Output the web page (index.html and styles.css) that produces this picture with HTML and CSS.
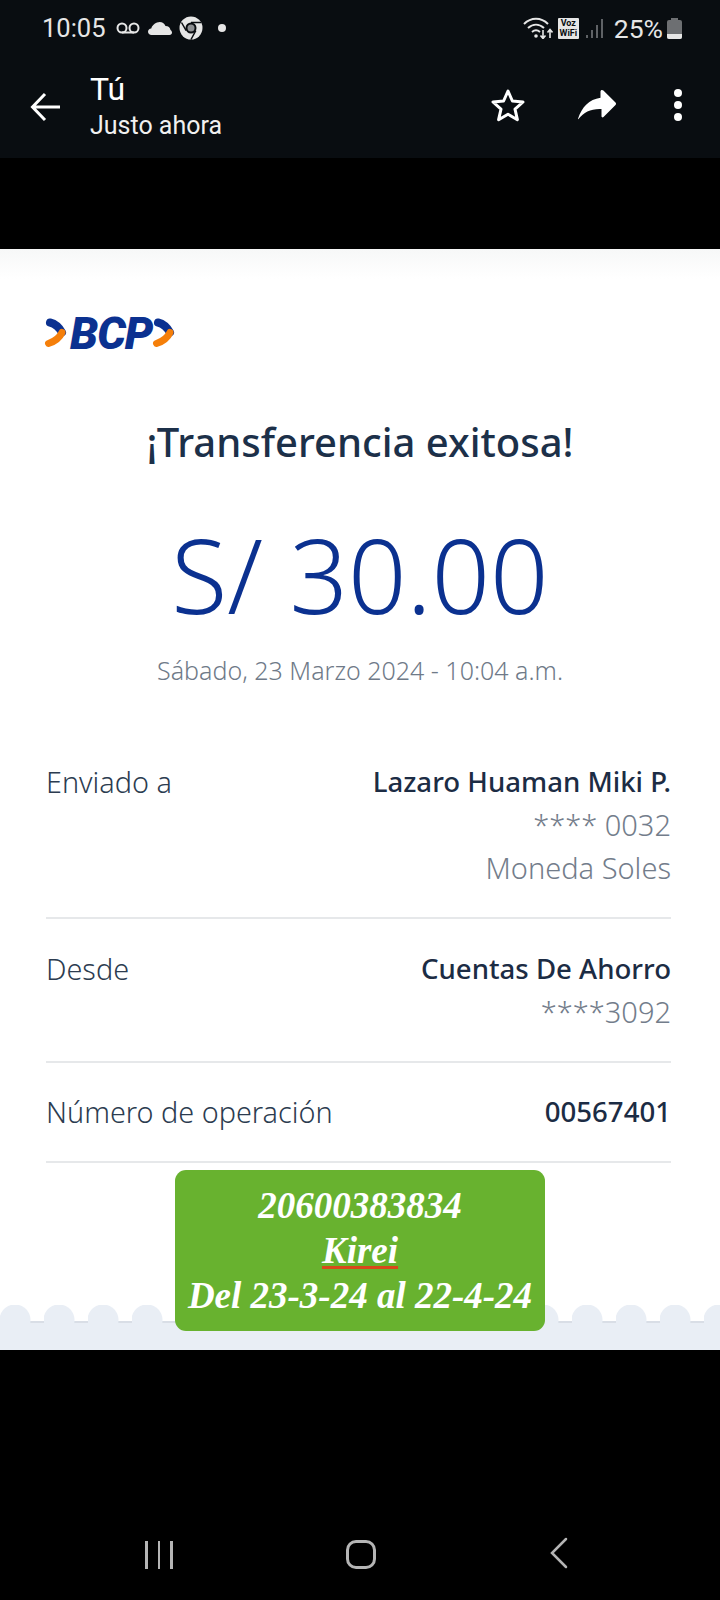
FILE: index.html
```html
<!DOCTYPE html>
<html lang="es">
<head>
    <meta charset="UTF-8">
    <meta name="viewport" content="width=device-width, initial-scale=1.0">
    <title>Transferencia exitosa</title>
    <link rel="stylesheet" href="styles.css">
</head>
<body>
    <div class="phone">
        <header class="topbar">
            <div class="status">
                <div class="status-left">
                    <span class="clock">10:05</span>
                    <svg class="ic-voicemail" viewBox="0 0 24 12" width="24" height="12"><circle cx="6" cy="6" r="4.500" fill="none" stroke="#e6e6e6" stroke-width="2"/><circle cx="18" cy="6" r="4.500" fill="none" stroke="#e6e6e6" stroke-width="2"/><path d="M6 10.500h12" stroke="#e6e6e6" stroke-width="2"/></svg>
                    <svg class="ic-cloud" viewBox="0 0 24 14" width="24" height="14"><path d="M3.500 14C1.500 14 0 12.600 0 10.800 0 9 1.400 7.700 3.200 7.500 4 4.800 6 2.800 9 1.500 12.500 0 16 1.500 17.500 5 20.500 5 22 6.500 22.500 9 23.500 9.500 24 10.800 24 11.800 24 13 23 14 21.500 14z" fill="#e6e6e6"/></svg>
                    <svg class="ic-chrome" viewBox="0 0 24 24" width="24" height="24"><circle cx="12" cy="12" r="11.500" fill="#e6e6e6"/><circle cx="12" cy="12" r="5.500" fill="#0a0d11"/><circle cx="12" cy="12" r="3.500" fill="#8d8f92"/><path d="M12 6.500h10M7.200 14.700 2.500 6.500M16.800 14.700 12 23.500" stroke="#0a0d11" stroke-width="1.500"/></svg>
                    <span class="dot"></span>
                </div>
                <div class="status-right">
                    <svg class="ic-wifi" viewBox="0 0 30 22" width="30" height="22"><g fill="none" stroke="#e6e6e6" stroke-width="2"><path d="M1 7c7-7 17-7 24 0"/><path d="M5 11c5-4.500 11-4.500 16 0"/><path d="M9 15c3-2.500 5-2.500 8 0"/></g><circle cx="13" cy="19" r="1.800" fill="#e6e6e6"/><path d="M20 13v8M17.500 18.500l2.500 3 2.500-3M27 21v-8M24.500 15.500l2.500-3 2.500 3" fill="none" stroke="#e6e6e6" stroke-width="1.600"/></svg>
                    <span class="voz">Voz<br>WiFi</span>
                    <svg class="ic-signal" viewBox="0 0 20 20" width="20" height="20"><g fill="#5f6266"><rect x="1" y="17" width="2" height="3"/><rect x="6" y="12" width="2" height="8"/><rect x="11" y="7" width="2" height="13"/><rect x="16" y="1" width="2" height="19"/></g></svg>
                    <span class="percent">25%</span>
                    <span class="battery"><span class="battery-cap"></span><span class="battery-body"><span class="battery-fill"></span></span></span>
                </div>
            </div>
            <div class="appbar">
                <svg class="ic-back" viewBox="0 0 32 32" width="32" height="32"><path d="M30 16H3M15 3 2.500 16 15 29" fill="none" stroke="#fff" stroke-width="3"/></svg>
                <div class="title-block">
                    <div class="title">Tú</div>
                    <div class="subtitle">Justo ahora</div>
                </div>
                <svg class="ic-star" viewBox="0 0 36 34" width="36" height="34"><path d="M18 3l4.400 10 10.600 1-8 7.200 2.400 10.500L18 26.200 8.600 31.700 11 21.200 3 14l10.600-1z" fill="none" stroke="#fff" stroke-width="3" stroke-linejoin="round"/></svg>
                <svg class="ic-forward" viewBox="0 0 38 30" width="38" height="30"><path d="M24 0c.5 0 1 .2 1.400.6L37.500 12.500c.7.700.7 1.800 0 2.500L25.500 27c-.8.800-2 .3-2-.8v-7.200C13 18.500 6 22 .5 29c-.3.400-.7.100-.5-.3C4 17 11 9.500 22.500 7.800V1.500C22.500.6 23.200 0 24 0z" fill="#fff"/></svg>
                <div class="dots"><span></span><span></span><span></span></div>
            </div>
        </header>

        <main class="receipt">
            <div class="logo">
                <svg viewBox="0 0 24 30" width="24" height="30"><path d="M6 4.500c4 1 9 4.500 12 10" fill="none" stroke="#0b3190" stroke-width="8" stroke-linecap="round"/><path d="M18 14.500c-2.500 5.500-7.500 9-13.500 11" fill="none" stroke="#f57f0a" stroke-width="7" stroke-linecap="round"/></svg>
                <span class="logo-text">BCP</span>
                <svg viewBox="0 0 24 30" width="24" height="30"><path d="M6 4.500c4 1 9 4.500 12 10" fill="none" stroke="#0b3190" stroke-width="8" stroke-linecap="round"/><path d="M18 14.500c-2.500 5.500-7.500 9-13.500 11" fill="none" stroke="#f57f0a" stroke-width="7" stroke-linecap="round"/></svg>
            </div>
            <h1 class="heading">¡Transferencia exitosa!</h1>
            <div class="amount">S/ 30.00</div>
            <div class="date">Sábado, 23 Marzo 2024 - 10:04 a.m.</div>

            <section class="rows">
                <div class="row row-sent">
                    <div class="label">Enviado a</div>
                    <div class="values">
                        <div class="strong">Lazaro Huaman Miki P.</div>
                        <div class="muted">**** 0032</div>
                        <div class="muted">Moneda Soles</div>
                    </div>
                </div>
                <div class="row row-from">
                    <div class="label">Desde</div>
                    <div class="values">
                        <div class="strong">Cuentas De Ahorro</div>
                        <div class="muted">****3092</div>
                    </div>
                </div>
                <div class="row row-op">
                    <div class="label">Número de operación</div>
                    <div class="values">
                        <div class="strong">00567401</div>
                    </div>
                </div>
            </section>

            <div class="scallops"></div>

            <div class="sticker">
                <div>20600383834</div>
                <div><span class="kirei">Kirei</span></div>
                <div>Del 23-3-24 al 22-4-24</div>
            </div>
        </main>

        <footer class="navbar">
            <div class="nav-recent"><span></span><span></span><span></span></div>
            <div class="nav-home"></div>
            <svg class="nav-back" viewBox="0 0 18 32" width="18" height="32"><path d="M16 2 2 16l14 14" fill="none" stroke="#b5b5b5" stroke-width="2.500" stroke-linecap="round"/></svg>
        </footer>
    </div>
</body>
</html>
```

FILE: styles.css
```css
* {
    box-sizing: border-box;
}

body {
    margin: 0;
    background-color: #000;
    font-family: "Noto Sans", sans-serif;
}

.phone {
    width: 720px;
    height: 1600px;
    display: flex;
    flex-direction: column;
    overflow: hidden;
}

/* barra superior */
.topbar {
    height: 158px;
    background-color: #090d11;
    color: #fff;
    font-family: Roboto, sans-serif;
    margin-bottom: 91px;
    flex: none;
}

.status {
    height: 56px;
    padding: 0 38px 0 42px;
    display: flex;
    justify-content: space-between;
    align-items: center;
    color: #e6e6e6;
}

.status-left,
.status-right {
    display: flex;
    align-items: center;
}

.clock {
    font-size: 25.500px;
    margin-right: 10px;
}

.ic-voicemail {
    margin-right: 8px;
}

.ic-chrome {
    margin-left: 7px;
}

.dot {
    width: 8px;
    height: 8px;
    border-radius: 50%;
    background-color: #e6e6e6;
    margin-left: 15px;
}

.ic-wifi {
    margin-right: 5px;
}

.voz {
    width: 21px;
    height: 21px;
    background-color: #e6e6e6;
    color: #090d11;
    font-size: 9px;
    font-weight: 700;
    line-height: 10px;
    text-align: center;
    border-radius: 1px;
    margin-right: 6px;
}

.ic-signal {
    margin-right: 9px;
}

.percent {
    font-size: 26.500px;
    margin-right: 4px;
}

.battery {
    width: 15px;
    display: flex;
    flex-direction: column;
    align-items: center;
}

.battery-cap {
    width: 7px;
    height: 2px;
    background-color: #6d6f72;
}

.battery-body {
    width: 15px;
    height: 19px;
    background-color: #6d6f72;
    border-radius: 2px;
    display: flex;
    align-items: flex-end;
    overflow: hidden;
}

.battery-fill {
    width: 100%;
    height: 5px;
    background-color: #e6e6e6;
}

.appbar {
    height: 102px;
    padding: 0 38px 4px 30px;
    display: flex;
    align-items: center;
}

.ic-back {
    margin-right: 28px;
    margin-top: 4px;
}

.title-block {
    flex: 1;
}

.title {
    font-size: 32px;
    line-height: 40px;
}

.subtitle {
    font-size: 25px;
    line-height: 30px;
    margin-top: 2px;
    color: #f0f0f0;
}

.ic-star {
    margin-right: 52px;
}

.ic-forward {
    margin-right: 58px;
}

.dots {
    display: flex;
    flex-direction: column;
    gap: 4px;
}

.dots span {
    width: 8px;
    height: 8px;
    border-radius: 50%;
    background-color: #fff;
}

/* recibo */
.receipt {
    position: relative;
    height: 1101px;
    flex: none;
    background: linear-gradient(#f7f8f8, #fff 30px);
    display: flex;
    flex-direction: column;
    padding-top: 66px;
}

.logo {
    margin-left: 44px;
    height: 36px;
    display: flex;
    align-items: center;
}

.logo-text {
    font-family: Roboto, sans-serif;
    font-weight: 900;
    font-style: italic;
    font-size: 45px;
    letter-spacing: -1px;
    color: #0b3190;
    margin: 0 0 0 2px;
}

.heading {
    margin: 67px 0 0;
    text-align: center;
    font-size: 40px;
    line-height: 48px;
    font-weight: 500;
    color: #1c3049;
}

.amount {
    margin-top: 43px;
    text-align: center;
    font-size: 102.500px;
    line-height: 130px;
    font-weight: 300;
    color: #0b3190;
}

.date {
    margin-top: 15px;
    text-align: center;
    font-size: 25px;
    line-height: 32px;
    font-weight: 300;
    color: #6f7a88;
}

.rows {
    margin: 74px 49px 0 46px;
}

.row {
    display: flex;
    justify-content: space-between;
    border-bottom: 2px solid #e6e8ea;
    font-size: 28.800px;
}

.row-sent {
    height: 159px;
}

.row-from {
    height: 144px;
    padding-top: 28px;
}

.row-op {
    height: 100px;
    padding-top: 27px;
}

.label {
    color: #2c3c50;
    font-weight: 300;
    line-height: 43px;
}

.values {
    text-align: right;
}

.strong {
    color: #1c2c44;
    font-size: 27.600px;
    font-weight: 500;
    line-height: 43px;
}

.muted {
    color: #737d8b;
    font-size: 29px;
    font-weight: 300;
    line-height: 43px;
}

/* borde de festones */
.scallops {
    position: absolute;
    left: 0;
    right: 0;
    bottom: 0;
    height: 45px;
    background:
        radial-gradient(circle at 15px 15px, #e9eef5 15px, transparent 16px) 0 0 / 44px 19px repeat-x,
        linear-gradient(#d9dee6 2px, #e9eef5 2px) 0 16px / 100% 29px no-repeat;
}

.sticker {
    position: absolute;
    left: 175px;
    top: 921px;
    width: 370px;
    height: 161px;
    background-color: #68b22f;
    border-radius: 11px;
    color: #fff;
    font-family: "Liberation Serif", serif;
    font-style: italic;
    font-weight: 700;
    font-size: 37px;
    line-height: 45px;
    text-align: center;
    padding-top: 13px;
}

.kirei {
    text-decoration: underline;
    text-decoration-color: #d8481a;
    text-decoration-thickness: 3px;
    text-underline-offset: 3px;
}

/* barra de navegacion */
.navbar {
    flex: 1;
    display: flex;
    align-items: flex-end;
    justify-content: space-between;
    padding: 0 152px 31px 145px;
}

.nav-recent {
    display: flex;
    gap: 10px;
    height: 28px;
}

.nav-recent span {
    width: 2.500px;
    background-color: #b5b5b5;
}

.nav-home {
    width: 30px;
    height: 29px;
    border: 3px solid #b5b5b5;
    border-radius: 10px;
}
```
